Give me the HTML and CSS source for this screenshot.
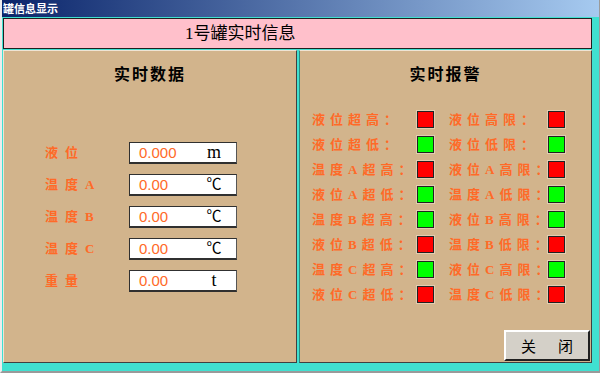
FILE: index.html
```html
<!DOCTYPE html>
<html>
<head>
  <meta charset="UTF-8">
  <title>罐信息显示</title>
  <link rel="stylesheet" href="styles.css">
</head>

<body>
  <div class="window">
    <div class="titlebar">罐信息显示</div>
    <div class="client">
      <div class="header">1号罐实时信息</div>
      <div class="panels">
        <div class="panel data">
          <h2>实时数据</h2>
          <div class="fields">
            <span class="label">液位</span>
            <div class="box"><span class="value">0.000</span><span class="unit big">m</span></div>
            <span class="label">温度A</span>
            <div class="box"><span class="value">0.00</span><span class="unit">℃</span></div>
            <span class="label">温度B</span>
            <div class="box"><span class="value">0.00</span><span class="unit">℃</span></div>
            <span class="label">温度C</span>
            <div class="box"><span class="value">0.00</span><span class="unit">℃</span></div>
            <span class="label">重量</span>
            <div class="box"><span class="value">0.00</span><span class="unit big">t</span></div>
          </div>
        </div>

        <div class="panel alarm">
          <h2>实时报警</h2>
          <div class="alarms">
            <span class="name">液位超高：</span><span class="led red"></span>
            <span class="name">液位高限：</span><span class="led red"></span>
            <span class="name">液位超低：</span><span class="led green"></span>
            <span class="name">液位低限：</span><span class="led green"></span>
            <span class="name">温度A超高：</span><span class="led red"></span>
            <span class="name">液位A高限：</span><span class="led red"></span>
            <span class="name">液位A超低：</span><span class="led green"></span>
            <span class="name">温度A低限：</span><span class="led green"></span>
            <span class="name">温度B超高：</span><span class="led green"></span>
            <span class="name">液位B高限：</span><span class="led green"></span>
            <span class="name">液位B超低：</span><span class="led red"></span>
            <span class="name">温度B低限：</span><span class="led red"></span>
            <span class="name">温度C超高：</span><span class="led green"></span>
            <span class="name">液位C高限：</span><span class="led green"></span>
            <span class="name">液位C超低：</span><span class="led red"></span>
            <span class="name">温度C低限：</span><span class="led red"></span>
          </div>
          <button class="close">关<span class="space"></span>闭</button>
        </div>
      </div>
    </div>
  </div>
</body>

</html>
```

FILE: styles.css
```css
* {
  box-sizing: border-box;
  padding: 0;
  margin: 0;
}

body {
  font-family: "Noto Sans CJK SC", sans-serif;
  background: #d4d0c8;
}

.window {
  width: 600px;
  height: 373px;
  border-left: 2px solid #ececec;
  border-right: 1px solid #9a9a9a;
  border-bottom: 2px solid #9a9a9a;
}

.titlebar {
  height: 17px;
  padding-left: 1px;
  background: linear-gradient(to right, #0a246a, #a6caf0);
  color: #fff;
  font-size: 11px;
  font-weight: bold;
  line-height: 17px;
}

.client {
  height: 354px;
  padding: 1px 7px 8px 1px;
  background: #40e0d0;
}

.header {
  height: 31px;
  margin-bottom: 1px;
  padding-left: 181px;
  background: #ffc0cb;
  border: 1px solid #202020;
  font-family: "Liberation Serif", "Noto Sans CJK SC", serif;
  font-size: 17px;
  line-height: 29px;
  color: #000;
}

.panels {
  display: flex;
  gap: 2px;
  height: 313px;
}

.panel {
  display: flex;
  flex-direction: column;
  background: #d2b48c;
  border-top: 1px solid #efe4d4;
  border-left: 1px solid #efe4d4;
  border-right: 1px solid #404040;
  border-bottom: 1px solid #404040;
}

.panel.data {
  width: 294px;
}

.panel.alarm {
  width: 293px;
  border-left-color: #2a8a80;
}

h2 {
  padding-top: 12px;
  font-size: 16px;
  font-weight: bold;
  line-height: 20px;
  letter-spacing: 2px;
  text-align: center;
  color: #000;
}

.fields {
  display: grid;
  grid-template-columns: 84px 108px;
  row-gap: 10px;
  margin-top: 59px;
  padding-left: 41px;
}

.label {
  font-family: "Liberation Serif", "Noto Sans CJK SC", serif;
  font-size: 13px;
  font-weight: bold;
  letter-spacing: 7px;
  line-height: 22px;
  color: #ff6a28;
}

.box {
  display: grid;
  grid-template-columns: 64px 22px;
  height: 22px;
  padding-left: 9px;
  background: #fff;
  border: 1px solid #303030;
  border-right-color: #555;
  border-bottom: 2px solid #303030;
  line-height: 19px;
}

.value {
  font-family: "Liberation Sans", sans-serif;
  font-size: 15px;
  color: #ff6a28;
}

.unit {
  font-family: "Liberation Serif", "Noto Sans CJK SC", serif;
  font-size: 15px;
  text-align: center;
  color: #000;
}

.unit.big {
  font-size: 18px;
}

.alarms {
  display: grid;
  grid-template-columns: 105px 32px 99px 17px;
  grid-auto-rows: 17px;
  row-gap: 8px;
  margin-top: 28px;
  padding-left: 12px;
}

.name {
  font-family: "Liberation Serif", "Noto Sans CJK SC", serif;
  font-size: 13px;
  font-weight: bold;
  letter-spacing: 5px;
  line-height: 17px;
  white-space: nowrap;
  color: #ff6a28;
}

.led {
  width: 17px;
  height: 17px;
  border: 1px solid #222;
  box-shadow: 0 0 0 1px #e2cdb0;
}

.led.red {
  background: #ff0000;
}

.led.green {
  background: #00ff00;
}

.close {
  align-self: flex-end;
  width: 86px;
  height: 31px;
  margin: auto 1px 1px 0;
  background: #d4d0c8;
  border: 2px solid;
  border-color: #fff #202020 #202020 #fff;
  font-family: "Noto Sans CJK SC", sans-serif;
  font-size: 15px;
  color: #000;
}

.close .space {
  display: inline-block;
  width: 22px;
}
```
